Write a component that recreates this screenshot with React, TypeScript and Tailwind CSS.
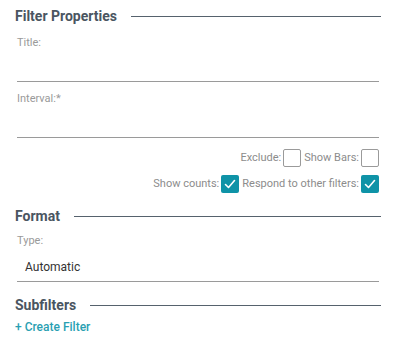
import React from "react";

function Heading({ title, className = "" }: { title: string; className?: string }) {
  return (
    <div className={`flex h-5 items-center gap-[14px] ${className}`}>
      <span className="text-[14px] font-bold leading-5 text-[#4a5561]">{title}</span>
      <div className="h-px flex-1 bg-[#56626d]" />
    </div>
  );
}

function Field({ label, value }: { label: string; value?: string }) {
  return (
    <div className="mx-[2px] mt-[10px]">
      <div className="text-[11px] leading-[14px] text-[#9a9a9a]">{label}</div>
      <div className="flex h-[32px] items-end border-b border-[#9a9a9a] px-[8px] pb-[6px]">
        {value && <span className="text-[12px] leading-4 text-[#333]">{value}</span>}
      </div>
    </div>
  );
}

function Check({ label, checked }: { label: string; checked?: boolean }) {
  return (
    <label className="flex items-center gap-[2px]">
      <span className="text-[11px] text-[#8c8c8c]">{label}</span>
      {checked ? (
        <span className="flex h-[18px] w-[18px] items-center justify-center rounded-[2px] bg-[#0f93a7]">
          <svg width="12" height="12" viewBox="0 0 12 12" fill="none">
            <path d="M1.5 6.5 L4.5 9.5 L10.5 2.5" stroke="white" strokeWidth="1.6" strokeLinecap="round" strokeLinejoin="round" />
          </svg>
        </span>
      ) : (
        <span className="h-[18px] w-[18px] rounded-[2px] border border-[#9a9a9a] bg-white" />
      )}
    </label>
  );
}

export default function App() {
  return (
    <div
      className="w-[393px] h-[344px] bg-white pl-[15px] pr-[12px] pt-[6px]"
      style={{ fontFamily: "Roboto, 'Liberation Sans', sans-serif" }}
    >
      <Heading title="Filter Properties" />
      <Field label="Title:" />
      <Field label="Interval:*" />
      <div className="mr-[2px] mt-[11px] flex flex-col items-end gap-[8px]">
        <div className="flex h-[18px] items-center gap-[3px]">
          <Check label="Exclude:" />
          <Check label="Show Bars:" />
        </div>
        <div className="flex h-[18px] items-center gap-[3px]">
          <Check label="Show counts:" checked />
          <Check label="Respond to other filters:" checked />
        </div>
      </div>
      <Heading title="Format" className="mt-[13px]" />
      <div className="mx-[2px] mt-[8px]">
        <div className="text-[11px] leading-[14px] text-[#9a9a9a]">Type:</div>
        <div className="flex h-[34px] items-end border-b border-[#9a9a9a] px-[8px] pb-[6px]">
          <span className="text-[12px] leading-4 text-[#333]">Automatic</span>
        </div>
      </div>
      <Heading title="Subfilters" className="mt-[13px]" />
      <div className="mt-[3px] text-[12px] font-medium leading-[18px] text-[#2a9fb2]">+ Create Filter</div>
    </div>
  );
}
